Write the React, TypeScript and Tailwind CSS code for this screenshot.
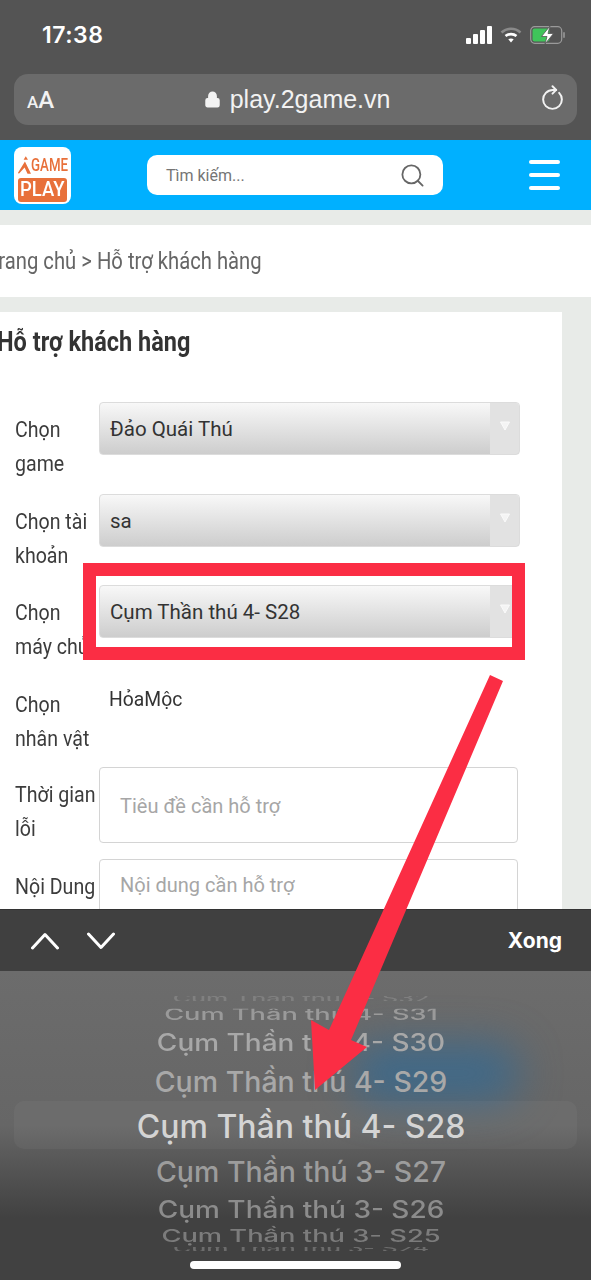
import React from 'react';
import { Search, RotateCw, Lock } from 'lucide-react';

const formFont = { fontFamily: 'Roboto, "Noto Sans", sans-serif' };

const pickerRows = [
  { text: 'Cụm Thần thú 4- S32', cls: 'h-[13px] text-[25px] scale-y-[0.4] text-[#8e8e8e]/60' },
  { text: 'Cụm Thần thú 4- S31', cls: 'h-[19px] text-[27.2px] scale-y-[0.6] text-[#9a9a9a]' },
  { text: 'Cụm Thần thú 4- S30', cls: 'h-[38px] text-[28px] scale-y-[0.85] text-[#a8a8a8]' },
  { text: 'Cụm Thần thú 4- S29', cls: 'h-[40px] text-[28.5px] text-[#a8a8a8]' },
  { text: 'Cụm Thần thú 4- S28', cls: 'h-[50px] text-[32px] text-[#d4d4d4]' },
  { text: 'Cụm Thần thú 3- S27', cls: 'h-[40px] text-[28.5px] text-[#9c9c9c]' },
  { text: 'Cụm Thần thú 3- S26', cls: 'h-[36px] text-[28px] scale-y-[0.85] text-[#8c8c8c]' },
  { text: 'Cụm Thần thú 3- S25', cls: '-mt-[9px] h-[34px] text-[27.3px] scale-y-[0.62] text-[#7c7c7c]' },
  { text: 'Cụm Thần thú 3- S24', cls: '-mt-[9px] h-[10px] text-[25px] scale-y-[0.4] text-[#6c6c6c]' },
];

function Label({ lines }: { lines: string[] }) {
  return (
    <div className="w-[84px] shrink-0 pt-[11px] whitespace-nowrap text-[22px] leading-[34px] text-[#3c3c3c]">
      {lines.map(l => (
        <div key={l} className="origin-left scale-x-[0.89]">{l}</div>
      ))}
    </div>
  );
}

function FakeSelect({ value }: { value: string }) {
  return (
    <div className="flex h-[53px] w-[421px] overflow-hidden rounded-[4px] border border-[#dcdcdc] bg-gradient-to-b from-[#f8f8f8] to-[#cdcdcd]">
      <div className="flex flex-1 items-center pl-[10px] pt-[1px] text-[20.5px] text-[#333]">{value}</div>
      <div className="flex w-[29px] items-start justify-center bg-[#e2e2e2] pt-[17px]">
        <svg width="12" height="12" viewBox="0 0 12 12" fill="#f4f4f4" stroke="#fafafa" strokeWidth="1"><path d="M1.5 2 H10.5 L6 10 Z" /></svg>
      </div>
    </div>
  );
}

function FakeInput({ placeholder, top }: { placeholder: string; top: string }) {
  return (
    <div className={`h-[76px] w-[419px] shrink-0 rounded-[4px] border border-[#d4d4d4] bg-white pl-[20px] text-[20px] leading-[26px] text-[#a6a6a6] ${top}`}>
      {placeholder}
    </div>
  );
}

export default function App() {
  return (
    <div className="relative flex h-[1280px] w-[591px] flex-col overflow-hidden bg-[#e8e8e8]" style={formFont}>
      {/* safari chrome */}
      <div className="h-[140px] shrink-0 bg-[#545454] px-[14px]">
        <div className="flex h-[74px] items-center justify-between pb-[4px] pl-[28px] pr-[11px] text-white">
          <span className="text-[23px] font-semibold tracking-[0.5px]" style={{ fontFamily: 'Inter, sans-serif' }}>17:38</span>
          <div className="flex items-center gap-[6px]">
            <svg width="28" height="18" viewBox="0 0 28 18" fill="#fff"><rect x="0" y="12" width="5" height="6" rx="1" /><rect x="7" y="8" width="5" height="10" rx="1" /><rect x="14" y="4" width="5" height="14" rx="1" /><rect x="21" y="0" width="5" height="18" rx="1" /></svg>
            <svg width="22" height="16" viewBox="0 0 22 16" fill="none" stroke="#fff" strokeWidth="2.6"><path d="M1.5 5.5 C7 0.5 15 0.5 20.5 5.5" stroke="#8a8a8a" /><path d="M5.5 9 C8.5 6.5 13.5 6.5 16.5 9" /><path d="M11 15.5 L8.3 12.2 C9.8 11.2 12.2 11.2 13.7 12.2 Z" fill="#fff" stroke="none" /></svg>
            <svg width="36" height="20" viewBox="0 0 36 20" fill="none" className="ml-[2px]">
              <rect x="0.7" y="1.7" width="31" height="16.6" rx="4" stroke="#9a9a9a" strokeWidth="1.2" />
              <rect x="2.5" y="3.5" width="17" height="13" rx="2" fill="#3fc45a" />
              <rect x="33" y="7" width="2" height="6" rx="1" fill="#8a8a8a" />
              <path d="M20 1 L11.5 11.5 H17 L15 19 L23.5 8.5 H18 Z" fill="#fff" stroke="#545454" strokeWidth="0.8" />
            </svg>
          </div>
        </div>
        <div className="flex h-[51px] items-center justify-between rounded-[14px] bg-[#6b6b6b] pl-[13px] pr-[12px] text-[#f2f2f2]">
          <span className="flex items-baseline text-[24px] font-medium leading-none"><span className="text-[17px]">A</span>A</span>
          <div className="flex items-center gap-[9px] text-[25px]" style={{ fontFamily: '"Liberation Sans", sans-serif' }}>
            <Lock size={17} fill="#f2f2f2" strokeWidth={2.4} />
            <span>play.2game.vn</span>
          </div>
          <RotateCw size={25} strokeWidth={1.9} className="-rotate-45" />
        </div>
      </div>

      {/* site header */}
      <div className="flex h-[70px] shrink-0 items-center bg-[#00b0ff] pl-[14px] pr-[31px]">
        <div className="flex h-[57px] w-[57px] shrink-0 flex-col items-center overflow-hidden rounded-[8px] bg-white pt-[6px]">
          <div className="flex h-[22px] w-[49px] items-end leading-none text-[#e8703a]">
            <svg className="shrink-0" width="13" height="20" viewBox="0 0 15 20" fill="#e8703a"><path d="M9 0 L11.5 4 L6.5 4 Z" /><path d="M8 6 L15 20 L11 20 L7.6 13 L1 20 L0 19 Z" /></svg>
            <div className="w-[36px] shrink-0 whitespace-nowrap">
              <div className="origin-left scale-x-[0.7] text-[19px] font-medium leading-[20px]">GAME</div>
            </div>
          </div>
          <div className="mt-[3px] flex h-[24px] w-[49px] shrink-0 items-center justify-center rounded-[3px] bg-[#e8703a] text-[21px] font-medium leading-none text-white">
            <span className="scale-x-[0.88]">PLAY</span>
          </div>
        </div>
        <div className="ml-[76px] flex h-[40px] w-[296px] items-center justify-between rounded-[10px] bg-white pl-[19px] pr-[17px] text-[16px] text-[#757575]">
          <span className="pt-[2px]">Tìm kiếm...</span>
          <Search size={27} strokeWidth={1.6} className="text-[#666]" />
        </div>
        <div className="ml-auto flex w-[31px] flex-col gap-[9px]">
          <div className="h-[4px] rounded-full bg-white" />
          <div className="h-[4px] rounded-full bg-white" />
          <div className="h-[4px] rounded-full bg-white" />
        </div>
      </div>

      {/* page */}
      <div className="min-h-0 flex-1 overflow-hidden bg-[#e8ebe8] pt-[15px]">
        <div className="flex h-[72px] items-center overflow-hidden bg-white text-[23px] text-[#666]">
          <span className="-ml-[13px] origin-left scale-x-[0.88] whitespace-nowrap pt-[3px]">Trang chủ &gt; Hỗ trợ khách hàng</span>
        </div>
        <div className="mt-[15px] h-[620px] w-[562px] overflow-hidden bg-white pl-[15px]">
          <h1 className="-ml-[18px] origin-left scale-x-[0.87] whitespace-nowrap pt-[13px] text-[27px] font-bold leading-[34px] text-[#333]">Hỗ trợ khách hàng</h1>
          <div className="mt-[43px] flex flex-col">
            <div className="flex h-[92px]"><Label lines={['Chọn', 'game']} /><FakeSelect value="Đảo Quái Thú" /></div>
            <div className="flex h-[91px]"><Label lines={['Chọn tài', 'khoản']} /><FakeSelect value="sa" /></div>
            <div className="flex h-[92px]">
              <Label lines={['Chọn', 'máy chủ']} />
              <div className="relative">
                <FakeSelect value="Cụm Thần thú 4- S28" />
                <div className="absolute -left-[16px] -top-[22px] h-[97px] w-[442px] border-[13px] border-[#fb2d44]" />
              </div>
            </div>
            <div className="flex h-[90px]">
              <Label lines={['Chọn', 'nhân vật']} />
              <div className="pl-[10px] pt-[7px] text-[21px] text-[#333]"><span className="inline-block origin-left scale-x-[0.92]">HỏaMộc</span></div>
            </div>
            <div className="flex h-[92px]"><Label lines={['Thời gian', 'lỗi']} /><FakeInput placeholder="Tiêu đề cần hỗ trợ" top="pt-[25px]" /></div>
            <div className="flex h-[76px]"><Label lines={['Nội Dung']} /><FakeInput placeholder="Nội dung cần hỗ trợ" top="pt-[12px]" /></div>
          </div>
        </div>
      </div>

      {/* ios keyboard accessory */}
      <div className="flex h-[62px] shrink-0 items-center justify-between border-t border-[#333] bg-[#404040] pl-[31px] pr-[29px] text-white">
        <div className="flex items-center gap-[28px]">
          <svg width="28" height="18" viewBox="0 0 28 18" fill="none" stroke="#fff" strokeWidth="3" strokeLinecap="round" strokeLinejoin="round"><path d="M1.5 16 L14 2.5 L26.5 16" /></svg>
          <svg width="28" height="18" viewBox="0 0 28 18" fill="none" stroke="#fff" strokeWidth="3" strokeLinecap="round" strokeLinejoin="round"><path d="M1.5 2 L14 15.5 L26.5 2" /></svg>
        </div>
        <span className="text-[21px] font-bold" style={{ fontFamily: 'Inter, sans-serif' }}>Xong</span>
      </div>

      {/* wheel picker */}
      <div className="relative h-[309px] shrink-0 overflow-hidden bg-gradient-to-b from-[#6c6c6c] via-[#666] via-50% to-[#414141] to-80%">
        <div className="absolute left-[350px] top-[72px] h-[60px] w-[170px] rounded-full bg-[#2f6a96]/70 blur-[20px]" />
        <div className="absolute left-[14px] right-[14px] top-[130px] h-[48px] rounded-[10px] bg-white/[0.04]" />
        <div className="relative flex flex-col items-center pl-[11px] pt-[21px] font-medium" style={{ fontFamily: 'Inter, sans-serif' }}>
          {pickerRows.map(r => (
            <div key={r.text} className={`flex items-center justify-center overflow-hidden whitespace-nowrap ${r.cls}`}>{r.text}</div>
          ))}
        </div>
        <div className="absolute bottom-[11px] left-[190px] h-[8px] w-[211px] rounded-full bg-white" />
      </div>

      {/* annotation arrow */}
      <svg className="absolute left-0 top-0" width="591" height="1280" viewBox="0 0 591 1280" fill="#fb2d44">
        <path d="M490 675 L503 681 L351 1040 L367 1047 L315 1090 L311 1020 L329 1030 Z" />
      </svg>
    </div>
  );
}
